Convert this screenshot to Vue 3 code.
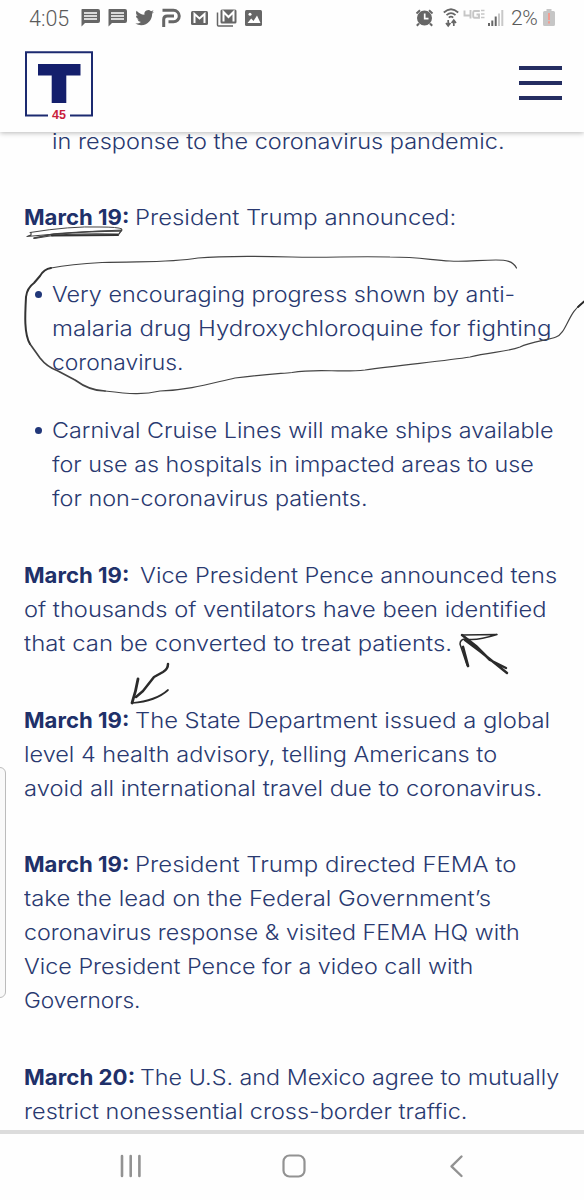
<script setup>
import { ref, onMounted } from 'vue'

const seg = (text, width, bold = false, gap = 0) => ({ text, width, bold, gap })
const blocks = [
  { kind: 'item first', lines: [[seg('in response to the coronavirus pandemic.', 453)]] },
  { kind: 'para', lines: [[seg('March 19:', 105, true, 6), seg('President Trump announced:', 321)]] },
  { kind: 'item dot', lines: [[seg('Very encouraging progress shown by anti-', 463)], [seg('malaria drug Hydroxychloroquine for fighting', 499)], [seg('coronavirus.', 132)]] },
  { kind: 'item dot next', lines: [[seg('Carnival Cruise Lines will make ships available', 502)], [seg('for use as hospitals in impacted areas to use', 482)], [seg('for non-coronavirus patients.', 316)]] },
  { kind: 'para', lines: [[seg('March 19:', 105, true, 11), seg('Vice President Pence announced tens', 417)], [seg('of thousands of ventilators have been identified', 522)], [seg('that can be converted to treat patients.', 428)]] },
  { kind: 'para', lines: [[seg('March 19:', 105, true, 6), seg('The State Department issued a global', 415)], [seg('level 4 health advisory, telling Americans to', 473)], [seg('avoid all international travel due to coronavirus.', 518)]] },
  { kind: 'para', lines: [[seg('March 19:', 105, true, 6), seg('President Trump directed FEMA to', 381)], [seg('take the lead on the Federal Government’s', 467)], [seg('coronavirus response & visited FEMA HQ with', 496)], [seg('Vice President Pence for a video call with', 449)], [seg('Governors.', 117)]] },
  { kind: 'para', lines: [[seg('March 20:', 111, true, 5), seg('The U.S. and Mexico agree to mutually', 419)], [seg('restrict nonessential cross-border traffic.', 443)]] },
]

const article = ref(null)
onMounted(() => {
  article.value.querySelectorAll('.seg').forEach((el) => {
    const glyphs = el.firstElementChild
    glyphs.style.transform = `scaleX(${el.clientWidth / glyphs.offsetWidth})`
  })
})
</script>

<template>
  <main class="screen">
    <header class="top">
      <div class="status">
        <span class="clock">4:05</span>
        <svg class="left-icons" width="184" height="24" viewBox="80 5 184 24">
          <g fill="#666">
            <path d="M82 8H98Q100 8 100 10V20Q100 22 98 22H85L81.500 25.500V9Q81.500 8 82 8Z" />
            <path d="M109 8H125Q127 8 127 10V20Q127 22 125 22H112L108.500 25.500V9Q108.500 8 109 8Z" />
            <path transform="translate(135.300 7.300) scale(.78)" d="M23.950 4.570a10 10 0 0 1-2.820.770 4.960 4.960 0 0 0 2.160-2.720c-.950.550-2 .950-3.130 1.190a4.920 4.920 0 0 0-8.380 4.480C7.690 8.090 4.070 6.130 1.640 3.160a4.820 4.820 0 0 0-.670 2.480c0 1.710.870 3.210 2.190 4.100a4.900 4.900 0 0 1-2.230-.620v.060a4.920 4.920 0 0 0 3.950 4.830 5 5 0 0 1-2.210.080 4.940 4.940 0 0 0 4.600 3.420A9.870 9.870 0 0 1 0 19.540a14 14 0 0 0 7.550 2.210c9.050 0 14-7.500 14-13.980 0-.210 0-.420-.020-.630a9.940 9.940 0 0 0 2.420-2.570z" />
            <rect x="191" y="10" width="17" height="14" rx="1.500" />
            <rect x="220.500" y="8.500" width="16" height="14" rx="1.500" />
            <rect x="245" y="9" width="17" height="16" rx="1.500" />
          </g>
          <g stroke="#fff" stroke-width="1.300"><path d="M84 12H97M84 15H97M84 18H97M111 12H124M111 15H124M111 18H124" /></g>
          <g fill="none" stroke="#666" stroke-width="3">
            <path d="M162.500 9.300H173.500A5.700 5.700 0 0 1 173.500 20.800H168.500" />
            <path d="M163.700 26V18.500Q163.700 15 167.200 15H174" />
          </g>
          <g fill="none" stroke="#fff" stroke-width="2">
            <path d="M194.500 22V13L199.500 17.500 204.500 13V22" />
            <path d="M223.500 20.500V11L228.500 16 233.500 11V20.500" />
          </g>
          <path d="M217.500 11.500V24Q217.500 25 218.500 25H233" fill="none" stroke="#666" stroke-width="1.500" />
          <path d="M247.500 22 251.200 17.500 253.500 20 257 14.500 260.500 22Z" fill="#fff" />
          <circle cx="250" cy="13.300" r="1.500" fill="#fff" />
        </svg>
        <svg class="right-icons" width="90" height="24" viewBox="414 5 90 24">
          <circle cx="424.500" cy="17" r="7.500" fill="#666" />
          <path d="M424.700 12.500V17.700H428.500" fill="none" stroke="#fff" stroke-width="1.700" />
          <path d="M416.500 12.500 420 9.300M432.500 12.500 429 9.300M419 22.500 416.800 24.800M430 22.500 432.200 24.800" stroke="#666" stroke-width="2" />
          <g fill="none" stroke="#666" stroke-width="1.700">
            <path d="M443.800 11.500Q451 5 458.200 11.500M446.500 14.200Q451 10 455.500 14.200" />
            <path d="M448.800 16.700Q451 14.700 453.200 16.700" />
            <path d="M448.200 19V24M446 22 448.200 24.800 450.400 22M453.800 25V20M451.600 22 453.800 19.200 456 22" />
          </g>
          <g fill="none" stroke="#c6c6c6" stroke-width="1.900">
            <path d="M464.500 9.500V14.500H471M470.500 9V17.500M479.800 10H474.500Q473.200 10 473.200 11.500V15Q473.200 16.700 474.500 16.700H479V13.500H476.500" />
            <path d="M481 9.500H484.500M481 13H484.500M481 16.500H484.500" stroke-width="1.300" />
          </g>
          <path d="M489 22V25M492.300 19.500V25M495.700 15.500V25" stroke="#666" stroke-width="2" />
          <path d="M499 12.500V25M502.300 9V25" stroke="#c8c8c8" stroke-width="2" />
        </svg>
        <span class="percent">2%</span>
        <svg class="battery" width="12" height="18" viewBox="0 0 12 18">
          <path d="M1.500 2H3.500V0H8.500V2H10.500Q12 2 12 3.500V15.500Q12 17 10.500 17H1.500Q0 17 0 15.500V3.500Q0 2 1.500 2Z" fill="#c6c6c6" />
          <path d="M6 4V11M6 12.200V14.500" stroke="#f39c90" stroke-width="2" />
        </svg>
      </div>
      <div class="brand">
        <svg width="70" height="70" viewBox="0 0 70 70">
          <path d="M24 64.500H2V1.200H68V64.500H46" fill="none" stroke="#1c2a70" stroke-width="2" />
          <path d="M14 13H56.500V24.500H42.300V52H27.700V24.500H14Z" fill="#141f6c" />
          <text x="35" y="68" text-anchor="middle" class="num">45</text>
        </svg>
        <div class="burger"><i></i><i></i><i></i></div>
      </div>
    </header>

    <article ref="article" class="article">
      <div v-for="(block, b) in blocks" :key="b" :class="block.kind">
        <div v-for="(line, l) in block.lines" :key="l" class="line">
          <span v-for="(s, i) in line" :key="i" class="seg" :class="{ bold: s.bold }" :style="{ width: s.width + 'px', marginRight: s.gap + 'px' }"><span class="glyphs">{{ s.text }}</span></span>
        </div>
      </div>
    </article>

    <nav class="nav">
      <svg width="22" height="24" viewBox="0 0 22 24"><path d="M2 2V22M10.700 2V22M19.400 2V22" stroke="#929292" stroke-width="2.600" stroke-linecap="round" /></svg>
      <svg class="home" width="26" height="26" viewBox="0 0 26 26"><rect x="2.500" y="1.500" width="21" height="21" rx="6" fill="none" stroke="#929292" stroke-width="2.200" /></svg>
      <svg width="15" height="26" viewBox="0 0 15 26"><path d="M12.500 2.500 2.500 12.300 12.500 22" fill="none" stroke="#929292" stroke-width="2.400" stroke-linecap="round" stroke-linejoin="round" /></svg>
    </nav>

    <div class="edge"></div>
    <svg class="ink" width="584" height="1200" viewBox="0 0 584 1200">
      <g fill="none" stroke="#444" stroke-linecap="round" stroke-linejoin="round">
        <path d="M30 232.500Q70 226 100 227 118 227 122 229 Q120 232 119 234" stroke-width="1" />
        <path d="M28 236 31 235V232.500M27 236.500Q70 232 122 230L119 234 Q70 233 50 236L34 238.500" stroke-width="1.200" />
        <path d="M34 238 54 234Q90 231 121 231" stroke-width="1.400" />
        <path d="M52 235.500 118 235" stroke="#333" stroke-width="2.200" />
        <path d="M516.500 268C513 261 506 260 496 260C480 260 465 262 450 261C430 260 420 257 390 257C350 256 330 258 292 257C250 256 220 256 198 258C170 263 140 261 102 262.500C78 264 62 266 51 268" stroke-width="1.200" />
        <path d="M51 268Q44 269 40 276L34 283Q27 288 26 297C25 315 24 334 30 344" stroke="#333" stroke-width="2" />
        <path d="M30 344 40 358Q47 367 58 371 L75 380Q90 391 105 391" stroke-width="1.700" />
        <path d="M105 391C130 394 143 395 160 391C190 390 212 383 235 378C260 375 275 374 292 372.500C320 368 338 373 365 370C400 365 445 361 470 357C490 352 507 352 520 347C530 342 548 340 556 337C567 333 568 311 584 302" stroke-width="1.200" />
        <g stroke="#2b2b2b">
          <path d="M578 307 584 301.500" stroke-width="1.800" />
          <path d="M462 635 476 646 490 660 506 668M465 640 481 652 507 673" stroke-width="2.500" />
          <path d="M462 635 497 634.500C486 638 474 641 466 639Q460 639 460 644L467 665" stroke-width="1.500" />
          <path d="M463 647 468 666" stroke-width="2.700" />
          <path d="M168 664Q168 669 163 672L154 677 143 691 136 697" stroke-width="2.500" />
          <path d="M138 679Q136 691 132 703" stroke-width="2.800" />
          <path d="M132 703Q156 701 168 690" stroke-width="1.700" />
        </g>
      </g>
    </svg>
  </main>
</template>

<style>
body { margin: 0; background: #fff; }
</style>

<style scoped>
.screen { position: relative; width: 584px; height: 1200px; overflow: hidden; background: #fefefe; display: flex; flex-direction: column; }
.top { height: 132px; flex: none; background: #fefefe; box-shadow: 0 1px 5px rgba(0, 0, 0, .28); position: relative; z-index: 1; }
.status { height: 36px; display: flex; align-items: center; box-sizing: border-box; padding: 0 29px; font: 300 21.500px Roboto, sans-serif; color: #5a5a5a; }
.clock { width: 51px; }
.right-icons { margin-left: 150px; }
.percent { width: 39px; box-sizing: border-box; padding-left: 7px; font-size: 21px; letter-spacing: -.5px; }
.battery { flex: none; }
.left-icons, .right-icons { flex: none; }
.brand { display: flex; justify-content: space-between; padding: 15px 22px 0 24px; }
.num { font: bold 12.500px "Liberation Sans", sans-serif; fill: #c91d3c; }
.burger { width: 43px; height: 34px; padding-top: 15px; display: flex; flex-direction: column; justify-content: space-between; }
.burger i { height: 4px; background: #242d61; }
.article { height: 998px; flex: none; box-sizing: border-box; padding: 0 24px; overflow: hidden; font: 300 21.500px/34px Inter, sans-serif; color: #293970; }
.line { height: 34px; display: flex; white-space: nowrap; }
.seg { flex: none; }
.glyphs { display: inline-block; transform-origin: 0 50%; }
.bold { font-weight: 700; color: #203069; }
.para { margin-top: 42.700px; }
.item { position: relative; padding-left: 28px; margin-top: 43px; }
.item.first { margin-top: -8.500px; }
.item.next { margin-top: 34px; }
.dot::before { content: ""; position: absolute; left: 11px; top: 14px; width: 7px; height: 7px; border-radius: 50%; background: #213779; }
.nav { flex: 1; border-top: 4px solid #dcdcdc; display: flex; justify-content: space-between; align-items: flex-start; padding: 20px 120px 0 120px; }
.home { margin-right: 4px; }
.edge { position: absolute; left: -8px; top: 767px; width: 12px; height: 229px; border: 1px solid #bbb; border-radius: 6px; background: #f9f9f9; }
.ink { position: absolute; left: 0; top: 0; z-index: 2; pointer-events: none; }
</style>
